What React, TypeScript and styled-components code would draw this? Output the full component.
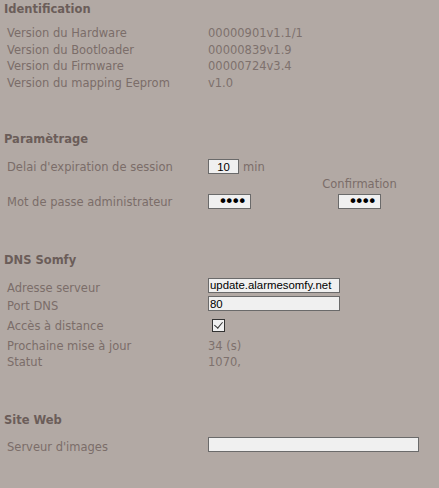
import React from "react";
import styled, { createGlobalStyle } from "styled-components";

const Global = createGlobalStyle`
  html, body { margin: 0; padding: 0; background: #b2a9a4; }
  body { font-family: "DejaVu Sans", Verdana, sans-serif; font-size: 11.5px; color: #7b6d69; }
`;

const Page = styled.div`
  display: flex;
  flex-direction: column;
  padding: 1px 0 0 4px;
  width: 435px;
  height: 488px;
  box-sizing: border-box;
`;

const Section = styled.section<{ $top: number }>`
  display: flex;
  flex-direction: column;
  margin-top: ${(p) => p.$top}px;
`;

const Heading = styled.h2<{ $gap: number }>`
  margin: 0 0 ${(p) => p.$gap}px 0;
  height: 16px;
  line-height: 16px;
  font-size: 11.5px;
  font-weight: bold;
  color: #6b5d59;
`;

const Row = styled.div<{ $h: number }>`
  display: grid;
  grid-template-columns: 201px 1fr;
  align-items: center;
  height: ${(p) => p.$h}px;
  padding-left: 3px;
`;

const Label = styled.span<{ $dy?: number }>`
  line-height: 14px;
  white-space: nowrap;
  transform: translateY(${(p) => p.$dy ?? 0}px);
`;

const Value = styled.span`
  line-height: 14px;
  white-space: nowrap;
  color: #7e716d;
`;

const Cell = styled.div`
  display: flex;
  align-items: center;
  gap: 4px;
`;

const Field = styled.input<{ $w: number; $center?: boolean }>`
  box-sizing: border-box;
  width: ${(p) => p.$w}px;
  height: 15px;
  margin: 0;
  padding: 0 1px;
  border: 1px solid #6a6a6a;
  background: #f0f0f0;
  color: #000;
  font-family: "Liberation Sans", Tahoma, sans-serif;
  font-size: 11.4px;
  line-height: 13px;
  text-align: ${(p) => (p.$center ? "center" : "left")};
  outline: none;
`;

const Secret = styled(Field)`
  font-family: "DejaVu Sans", sans-serif;
  font-size: 16px;
  letter-spacing: -3px;
  padding: 0 0 0 3px;
  line-height: 12px;
`;

const Unit = styled.span`
  line-height: 14px;
  color: #7b6d69;
`;

const PwRow = styled.div`
  display: grid;
  grid-template-columns: 201px 111px 81px;
  align-items: end;
  padding-left: 3px;
  margin-top: 1px;
`;

const PwLabel = styled.span`
  line-height: 14px;
  height: 15px;
  display: flex;
  align-items: center;
  padding-top: 1px;
`;

const ConfirmGroup = styled.div`
  display: flex;
  flex-direction: column;
  align-items: center;
  gap: 3px;
`;

const Check = styled.input`
  appearance: none;
  -webkit-appearance: none;
  box-sizing: border-box;
  width: 13px;
  height: 13px;
  margin: 0 0 0 4px;
  border: 1px solid #333;
  background: #f0f0f0;
  position: relative;
  &::after {
    content: "";
    position: absolute;
    left: 3px;
    top: 0px;
    width: 4px;
    height: 7px;
    border-right: 1px solid #333;
    border-bottom: 1px solid #333;
    transform: rotate(40deg);
  }
`;

export default function App() {
  return (
    <>
      <Global />
      <Page>
        <Section $top={0}>
          <Heading $gap={7}>Identification</Heading>
          <Row $h={17}><Label>Version du Hardware</Label><Value>00000901v1.1/1</Value></Row>
          <Row $h={17}><Label>Version du Bootloader</Label><Value>00000839v1.9</Value></Row>
          <Row $h={16}><Label>Version du Firmware</Label><Value>00000724v3.4</Value></Row>
          <Row $h={17}><Label>Version du mapping Eeprom</Label><Value>v1.0</Value></Row>
        </Section>

        <Section $top={40}>
          <Heading $gap={10}>Paramètrage</Heading>
          <Row $h={19}>
            <Label>Delai d'expiration de session</Label>
            <Cell><Field $w={31} $center defaultValue="10" /><Unit>min</Unit></Cell>
          </Row>
          <PwRow>
            <PwLabel>Mot de passe administrateur</PwLabel>
            <Cell><Secret type="password" $w={43} $center defaultValue="1234" /></Cell>
            <ConfirmGroup>
              <Unit>Confirmation</Unit>
              <Secret type="password" $w={43} $center defaultValue="1234" />
            </ConfirmGroup>
          </PwRow>
        </Section>

        <Section $top={43}>
          <Heading $gap={8}>DNS Somfy</Heading>
          <Row $h={18}>
            <Label $dy={3}>Adresse serveur</Label>
            <Cell><Field $w={132} defaultValue="update.alarmesomfy.net" /></Cell>
          </Row>
          <Row $h={19}>
            <Label $dy={2}>Port DNS</Label>
            <Cell><Field $w={132} defaultValue="80" /></Cell>
          </Row>
          <Row $h={24}>
            <Label $dy={1}>Accès à distance</Label>
            <Cell><Check type="checkbox" defaultChecked /></Cell>
          </Row>
          <Row $h={17}><Label>Prochaine mise à jour</Label><Value>34 (s)</Value></Row>
          <Row $h={16}><Label>Statut</Label><Value>1070,</Value></Row>
        </Section>

        <Section $top={42}>
          <Heading $gap={7}>Site Web</Heading>
          <Row $h={18}>
            <Label $dy={3}>Serveur d'images</Label>
            <Cell><Field $w={211} defaultValue="" /></Cell>
          </Row>
        </Section>
      </Page>
    </>
  );
}
